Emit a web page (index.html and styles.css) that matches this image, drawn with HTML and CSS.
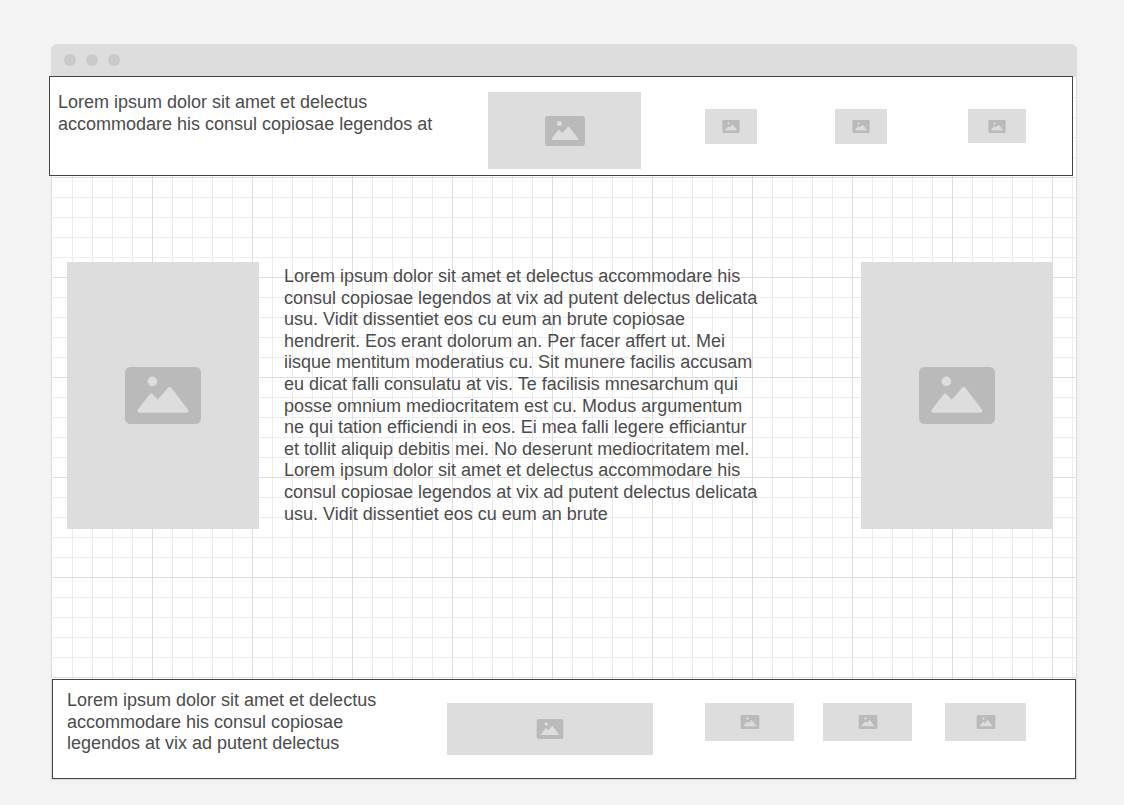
FILE: index.html
```html
<!DOCTYPE html>
<html lang="en">
<head>
<meta charset="utf-8">
<title>Page wireframe</title>
<link rel="stylesheet" href="styles.css">
</head>
<body>
<svg class="sprite" aria-hidden="true">
  <symbol id="picture" viewBox="0 0 76 57">
    <rect width="76" height="57" rx="5.5" fill="#bababa"/>
    <circle cx="27.4" cy="14.4" r="4.8" fill="#ddd"/>
    <path d="M14.5 43.8 26.3 28.5 32.7 35.5 44.7 22 61.3 43.8Z" fill="#ddd" stroke="#ddd" stroke-width="4" stroke-linejoin="round"/>
  </symbol>
</svg>
<div class="window">
  <div class="titlebar">
    <span class="dot"></span><span class="dot"></span><span class="dot"></span>
  </div>
  <div class="canvas">
    <header class="band header">
      <p class="header-text">Lorem ipsum dolor sit amet et delectus accommodare his consul copiosae legendos at</p>
      <div class="placeholder banner"><svg class="icon-medium"><use href="#picture"/></svg></div>
      <div class="placeholder thumb"><svg class="icon-tiny"><use href="#picture"/></svg></div>
      <div class="placeholder thumb"><svg class="icon-tiny"><use href="#picture"/></svg></div>
      <div class="placeholder thumb thumb-wide"><svg class="icon-tiny"><use href="#picture"/></svg></div>
    </header>
    <main class="main">
      <div class="placeholder portrait"><svg class="icon-large"><use href="#picture"/></svg></div>
      <p class="main-text">Lorem ipsum dolor sit amet et delectus accommodare his consul copiosae legendos at vix ad putent delectus delicata usu. Vidit dissentiet eos cu eum an brute copiosae hendrerit. Eos erant dolorum an. Per facer affert ut. Mei iisque mentitum moderatius cu. Sit munere facilis accusam eu dicat falli consulatu at vis. Te facilisis mnesarchum qui posse omnium mediocritatem est cu. Modus argumentum ne qui tation efficiendi in eos. Ei mea falli legere efficiantur et tollit aliquip debitis mei. No deserunt mediocritatem mel. Lorem ipsum dolor sit amet et delectus accommodare his consul copiosae legendos at vix ad putent delectus delicata usu. Vidit dissentiet eos cu eum an brute</p>
      <div class="placeholder portrait"><svg class="icon-large"><use href="#picture"/></svg></div>
    </main>
    <footer class="band footer">
      <p class="footer-text">Lorem ipsum dolor sit amet et delectus accommodare his consul copiosae legendos at vix ad putent delectus</p>
      <div class="placeholder strip"><svg class="icon-regular"><use href="#picture"/></svg></div>
      <div class="placeholder card"><svg class="icon-small"><use href="#picture"/></svg></div>
      <div class="placeholder card"><svg class="icon-small"><use href="#picture"/></svg></div>
      <div class="placeholder card card-narrow"><svg class="icon-small"><use href="#picture"/></svg></div>
    </footer>
  </div>
</div>
</body>
</html>
```

FILE: styles.css
```css
* {
  box-sizing: border-box;
}

body {
  display: flex;
  min-height: 100vh;
  margin: 0;
  padding: 44px 47px 25px 51px;
  background: #f4f4f4;
  color: #4c4c4c;
  font: 18px/1.2 "Liberation Sans", Arial, sans-serif;
}

p {
  margin: 0;
}

.sprite {
  position: absolute;
  width: 0;
  height: 0;
}

.window {
  display: flex;
  flex: 1;
  flex-direction: column;
  border-radius: 6px 6px 0 0;
  box-shadow: 0 2px 5px rgba(0, 0, 0, 0.03);
}

.titlebar {
  display: flex;
  gap: 10px;
  height: 33px;
  padding: 10px 13px;
  border-radius: 6px 6px 0 0;
  background: #ddd;
}

.dot {
  width: 12px;
  height: 12px;
  border-radius: 50%;
  background: #cacaca;
}

.canvas {
  display: flex;
  flex: 1;
  flex-direction: column;
  padding: 1px 0 0 1px;
  border: 1px solid #ddd;
  border-top: 0;
  background-color: #fff;
  background-image:
    linear-gradient(to left, #ddd 1px, transparent 1px),
    linear-gradient(to top, #ddd 1px, transparent 1px),
    linear-gradient(to left, #ececec 1px, transparent 1px),
    linear-gradient(to top, #ececec 1px, transparent 1px),
    none;
  background-size: 100px 100px, 100px 100px, 20px 20px, 20px 20px, auto;
  background-origin: content-box;
  background-clip: content-box, content-box, content-box, content-box, padding-box;
}

.band {
  display: grid;
  min-height: 100px;
  border: 1px solid #434343;
  background: #fff;
}

.header {
  grid-template-columns: 430fr 217fr 130fr 133fr 104fr;
  margin: -2px 3px 0 -4px;
  padding: 15px 0 6px 8px;
}

.header-text {
  max-width: 400px;
}

.main {
  display: grid;
  flex: 1;
  grid-template-columns: 217fr 577fr 215fr;
  padding: 86px 0 86px 14px;
}

.main-text {
  max-width: 476px;
  padding-top: 4px;
}

.footer {
  grid-template-columns: 380fr 258fr 118fr 122fr 130fr;
  margin: 0 0 0 -1px;
  padding: 10px 0 10px 14px;
}

.footer-text {
  max-width: 330px;
}

.placeholder {
  display: flex;
  align-items: center;
  justify-content: center;
  background: #ddd;
}

.banner {
  width: 153px;
  height: 77px;
}

.thumb {
  width: 52px;
  height: 35px;
  margin-top: 17px;
}

.thumb-wide {
  width: 58px;
  height: 34px;
}

.portrait {
  width: 192px;
  height: 267px;
}

.strip {
  width: 206px;
  height: 52px;
  margin-top: 13px;
}

.card {
  width: 89px;
  height: 38px;
  margin-top: 13px;
}

.card-narrow {
  width: 81px;
}

.icon-tiny {
  width: 18px;
  height: 13px;
}

.icon-small {
  width: 20px;
  height: 14px;
}

.icon-regular {
  width: 28px;
  height: 20px;
}

.icon-medium {
  width: 40px;
  height: 30px;
}

.icon-large {
  width: 76px;
  height: 57px;
}
```
